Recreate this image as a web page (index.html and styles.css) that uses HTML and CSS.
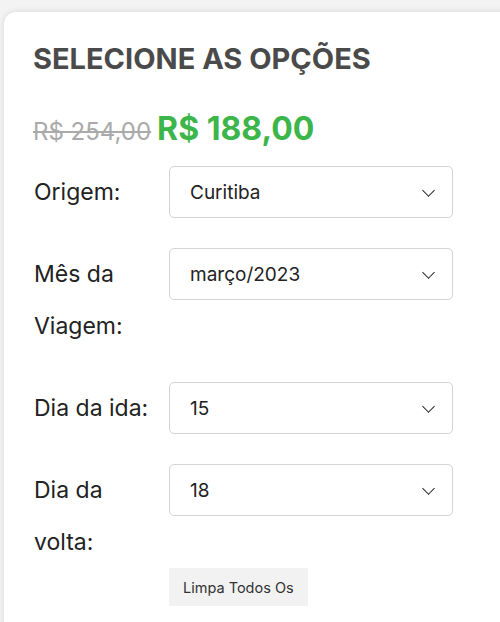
FILE: index.html
```html
<!DOCTYPE html>
<html lang="pt-BR">
<head>
    <meta charset="UTF-8">
    <meta name="viewport" content="width=device-width, initial-scale=1.0">
    <title>Selecione as opções</title>
    <link rel="stylesheet" href="styles.css">
</head>
<body>
    <div class="card">
        <h2 class="title">SELECIONE AS OPÇÕES</h2>
        <div class="price">
            <del class="price-old">R$ 254,00</del>
            <span class="price-new">R$ 188,00</span>
        </div>
        <form class="options">
            <div class="row">
                <label for="origem">Origem:</label>
                <div class="select-wrap">
                    <select id="origem">
                        <option selected>Curitiba</option>
                        <option>São Paulo</option>
                    </select>
                </div>
            </div>
            <div class="row">
                <label for="mes">Mês da Viagem:</label>
                <div class="select-wrap">
                    <select id="mes">
                        <option selected>março/2023</option>
                        <option>abril/2023</option>
                    </select>
                </div>
            </div>
            <div class="row">
                <label for="ida">Dia da ida:</label>
                <div class="select-wrap">
                    <select id="ida">
                        <option selected>15</option>
                        <option>16</option>
                    </select>
                </div>
            </div>
            <div class="row">
                <label for="volta">Dia da volta:</label>
                <div class="select-wrap">
                    <select id="volta">
                        <option selected>18</option>
                        <option>19</option>
                    </select>
                </div>
            </div>
            <div class="actions">
                <button type="reset" class="reset">Limpa Todos Os</button>
            </div>
        </form>
    </div>
</body>
</html>
```

FILE: styles.css
```css
* {
    margin: 0;
    padding: 0;
    box-sizing: border-box;
}
body {
    background: #f3f3f3;
    font-family: Inter, "Noto Sans", sans-serif;
    overflow: hidden;
    height: 100vh;
    padding: 12px 0 0 4px;
}
.card {
    width: 540px;
    min-height: 700px;
    background: #fff;
    border-radius: 12px;
    box-shadow: 0 0 6px rgba(0, 0, 0, 0.12);
    padding: 27px 0 0 29px;
}
.title {
    color: #4a4a4a;
    font-size: 29px;
    font-weight: 700;
    line-height: 40px;
}
.price {
    margin-top: 30px;
    display: flex;
    align-items: baseline;
    gap: 6px;
}
.price-old {
    color: #aaa;
    font-size: 24px;
}
.price-new {
    color: #3cb54a;
    font-size: 32px;
    font-weight: 700;
}
.options {
    margin-top: 18px;
    width: 420px;
}
.row {
    display: flex;
    align-items: flex-start;
    margin-bottom: 30px;
}
.row label {
    width: 120px;
    margin-right: 16px;
    flex-shrink: 0;
    color: #222;
    font-size: 23px;
    line-height: 52px;
    padding-left: 1px;
}
.select-wrap {
    position: relative;
    width: 285px;
}
.select-wrap::after {
    content: "";
    position: absolute;
    right: 20px;
    top: 20px;
    width: 8px;
    height: 8px;
    border-right: 1.5px solid #222;
    border-bottom: 1.5px solid #222;
    transform: rotate(45deg);
    pointer-events: none;
}
select {
    appearance: none;
    width: 100%;
    height: 52px;
    padding: 0 20px;
    border: 1px solid #d4d4d4;
    border-radius: 5px;
    background: #fff;
    color: #222;
    font-family: Inter, "Noto Sans", sans-serif;
    font-size: 19px;
    outline: none;
}
.actions {
    margin-top: -30px;
    padding-left: 136px;
}
.reset {
    height: 38px;
    padding: 0 14px;
    border: none;
    background: #f2f2f2;
    color: #333;
    font-family: Inter, "Noto Sans", sans-serif;
    font-size: 14.5px;
    cursor: pointer;
}
```
